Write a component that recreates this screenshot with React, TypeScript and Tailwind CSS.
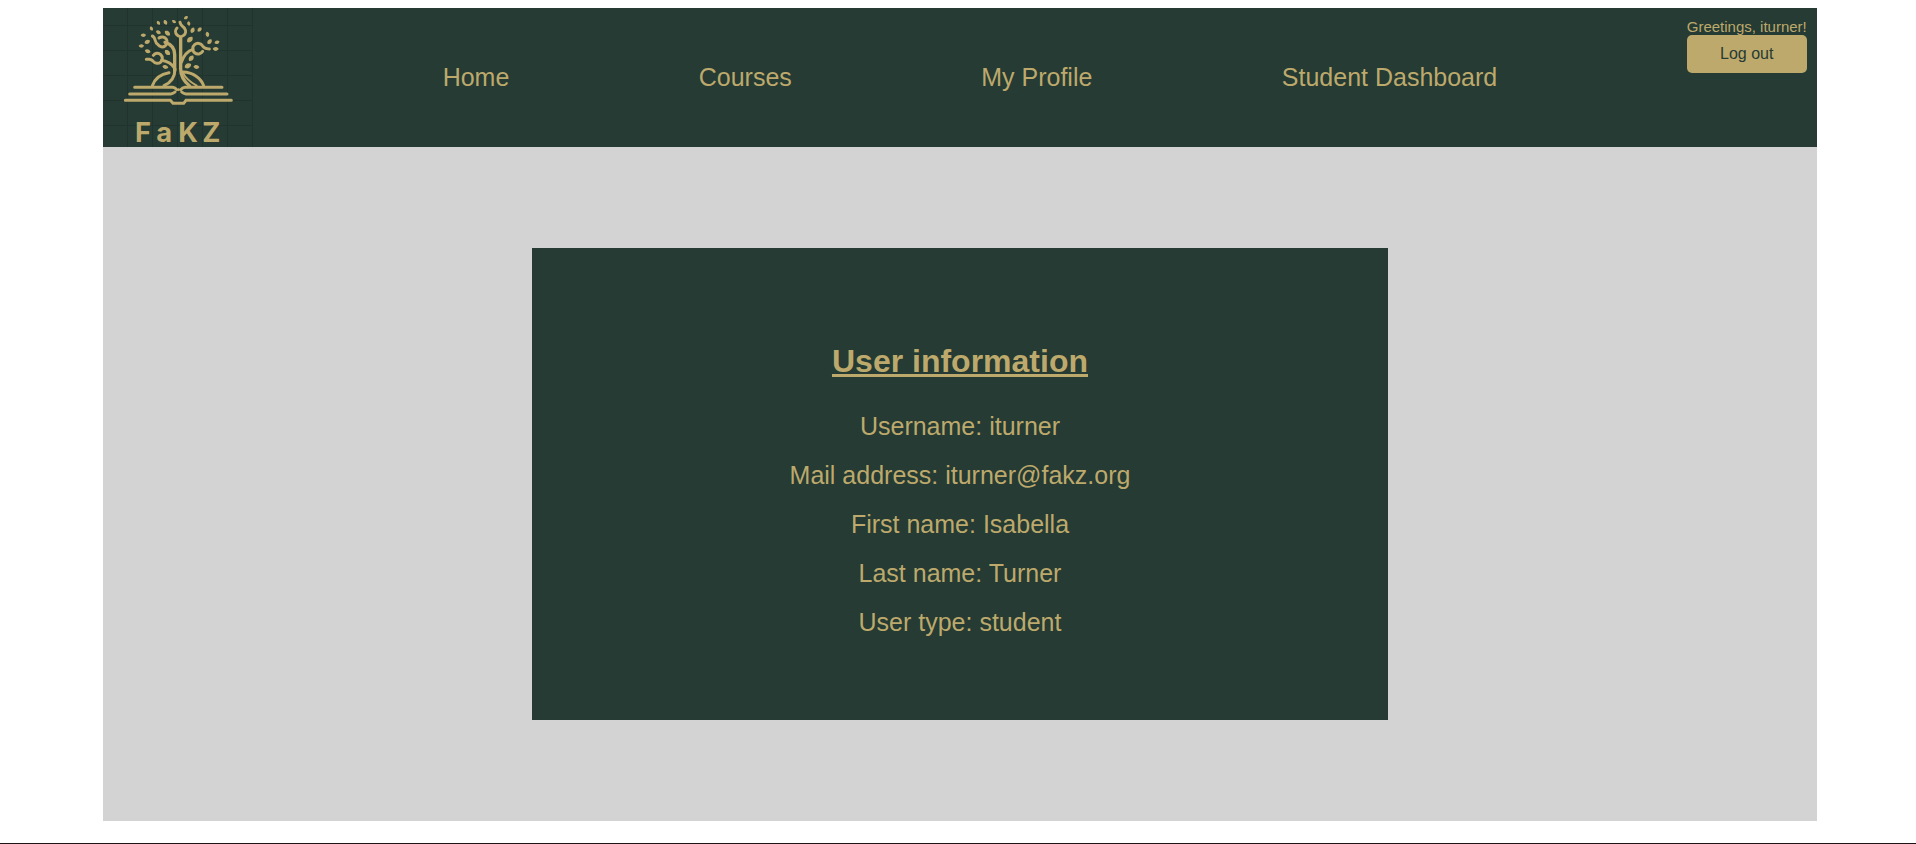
const leaves: [number, number, number, number][] = [
  // x, y, rotation, size
  [270, 53, -35, 7],
  [187, 69, 55, 7],
  [208, 67, 65, 8],
  [234, 65, 35, 7],
  [166, 86, 65, 7],
  [187, 97, 30, 8],
  [214, 100, 42, 10],
  [142, 106, 0, 8],
  [154, 126, -25, 9],
  [136, 138, 0, 8],
  [155, 154, 20, 9],
  [214, 158, 45, 10],
  [208, 201, 15, 9],
  [278, 71, 80, 7],
  [290, 91, -65, 9],
  [311, 89, -45, 8],
  [282, 119, -45, 11],
  [334, 103, 80, 8],
  [341, 125, -50, 9],
  [363, 127, -20, 8],
  [359, 147, 0, 9],
  [286, 175, -50, 10],
  [276, 198, -25, 11],
  [301, 201, 10, 9],
];

function Logo() {
  return (
    <svg
      viewBox="21 24 450 417"
      className="block h-[139px] w-[150px] shrink-0 overflow-visible"
      role="img"
      aria-label="FaKZ logo"
    >
      <path
        d="M94.500 24V441M169.500 24V441M244.500 24V441M319.500 24V441M394.500 24V441M469.500 24V441M21 76.500H471M21 151.500H471M21 226.500H471M21 301.500H471M21 376.500H471"
        stroke="#20332d"
        strokeWidth="3"
        fill="none"
      />
      <g fill="none" stroke="#bda96c" strokeWidth="9" strokeLinecap="round">
        {/* trunk and crown */}
        <path d="M254 112V207C254 232 266 246 281 258" strokeWidth="10" />
        <path d="M243 84A15 15 0 1 0 266 86C262 78 254 80 252 67" />
        <path d="M236 212V164C236 144 224 132 207 127" strokeWidth="10" />
        <path d="M189 114A15 15 0 1 1 186 134C174 128 181 113 169 108" />
        <path d="M236 205C227 190 214 184 197 181" />
        <path d="M172 166A15 15 0 1 1 172 184C165 174 160 178 151 178" />
        <path d="M256 187C264 164 277 152 291 148" />
        <path d="M320 154A16 16 0 1 1 320 138C326 147 332 146 340 147" />
        {/* roots */}
        <path d="M237 207C237 235 222 249 204 257" />
        <path d="M219 218C194 222 176 237 169 257" />
        <path d="M260 216C292 217 315 235 323 257" />
        <path d="M260 217C270 237 286 248 302 257" strokeWidth="6" />
        {/* book */}
        <path d="M116 262H230Q238 263 242 269" />
        <path d="M378 262H267Q259 263 254 269" />
        <path d="M101 282H224Q232 281 237 276" />
        <path d="M393 282H270Q262 281 257 276" />
        <path d="M88 301H223L231 310H263L270 301H406" />
      </g>
      <path d="M243 269L248 264L253 269L248 274Z" fill="#bda96c" />
      <g fill="#bda96c">
        {leaves.map(([x, y, angle, size]) => (
          <path
            key={`${x}-${y}`}
            d="M-1 0C-.7 -.8 .4 -1 1 -.1C.6 .8 -.4 .9 -1 0Z"
            transform={`translate(${x} ${y}) rotate(${angle}) scale(${size})`}
          />
        ))}
      </g>
      <text
        x="117 181 247 319"
        y="427"
        fill="#bda96c"
        fontFamily="Inter, 'Liberation Sans', sans-serif"
        fontSize="82"
        fontWeight="700"
      >
        FaKZ
      </text>
    </svg>
  );
}

const links = ["Home", "Courses", "My Profile", "Student Dashboard"];

const details = [
  ["Username", "iturner"],
  ["Mail address", "iturner@fakz.org"],
  ["First name", "Isabella"],
  ["Last name", "Turner"],
  ["User type", "student"],
];

export default function App() {
  return (
    <div className="flex min-h-screen flex-col bg-white font-['Liberation_Sans',Arial,sans-serif] text-[#bda96c]">
      <div className="grow pt-2 pr-1 pb-[22px] pl-2">
        <div className="mx-auto w-[90%]">
          <header className="flex bg-[#253b33]">
            <Logo />
            <nav className="flex grow items-center justify-evenly text-[25px] leading-[29px]">
              {links.map((label) => (
                <a key={label} href="#">
                  {label}
                </a>
              ))}
            </nav>
            <div className="flex shrink-0 flex-col items-stretch pt-[10px] pr-[10px]">
              <span className="text-[15px] leading-[17px]">Greetings, iturner!</span>
              <button
                type="button"
                className="h-[38px] w-[120px] cursor-pointer rounded-[5px] bg-[#bda96c] text-base text-[#253b33]"
              >
                Log out
              </button>
            </div>
          </header>
          <main className="bg-[#d3d3d3] py-[101px]">
            <section className="mx-auto w-1/2 bg-[#253b33] pt-[95px] pb-[83px] text-center">
              <h1 className="text-[32px] leading-[37px] font-bold underline">User information</h1>
              <div className="mt-8 flex flex-col gap-5 text-[25px] leading-[29px]">
                {details.map(([label, value]) => (
                  <p key={label}>
                    {label}: {value}
                  </p>
                ))}
              </div>
            </section>
          </main>
        </div>
      </div>
      <footer className="border-t border-[#1c1217]" />
    </div>
  );
}
